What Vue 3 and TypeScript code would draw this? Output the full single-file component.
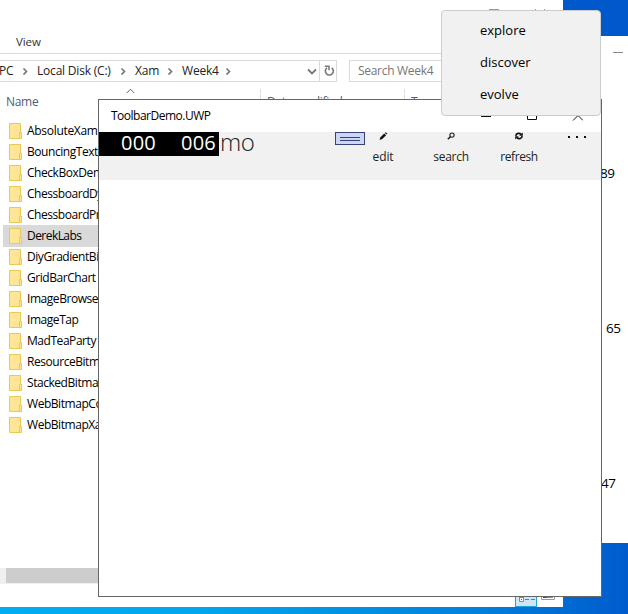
<script setup lang="ts">
interface Tool { id: string; label: string }
const crumbs: string[] = ['PC', 'Local Disk (C:)', 'Xam', 'Week4']
const folders: string[] = [
  'AbsoluteXam', 'BouncingText', 'CheckBoxDemo', 'ChessboardDynamic', 'ChessboardProportional',
  'DerekLabs', 'DiyGradientBitmap', 'GridBarChart', 'ImageBrowser', 'ImageTap', 'MadTeaParty',
  'ResourceBitmap', 'StackedBitmap', 'WebBitmapCode', 'WebBitmapXaml',
]
const selected = 'DerekLabs'
const tools: Tool[] = [
  { id: 'edit', label: 'edit' },
  { id: 'search', label: 'search' },
  { id: 'refresh', label: 'refresh' },
]
const menu: string[] = ['explore', 'discover', 'evolve']
</script>

<template>
  <main class="desktop">
    <section class="back-window">
      <span class="back-min"></span>
      <span class="num n1">89</span>
      <span class="num n2">65</span>
      <span class="num n3">47</span>
    </section>

    <section class="explorer">
      <header class="ribbon">
        <svg class="caption" width="80" height="16" viewBox="0 0 80 16">
          <path d="M8 9.5h10M54 9l1 1M63 9.5h1" stroke="#999" fill="none" />
        </svg>
        <span class="view">View</span>
      </header>
      <div class="address-row">
        <div class="address">
          <template v-for="c in crumbs" :key="c">
            <span class="crumb" :class="'c-' + c.slice(0, 2)">{{ c }}</span>
            <svg class="chev" width="6" height="8" viewBox="0 0 6 8"><path d="M1.500 1.500l3 3-3 3" stroke="#777" stroke-width="1.7" fill="none" /></svg>
          </template>
          <svg class="drop" width="10" height="7" viewBox="0 0 10 7"><path d="M1 1.500l4 4 4-4" stroke="#777" stroke-width="1.8" fill="none" /></svg>
          <span class="reload">
            <svg width="11" height="12" viewBox="0 0 11 12">
              <path d="M7.7 2.8A4 4 0 1 1 3 2.8" stroke="#777" stroke-width="1.6" fill="none" />
              <path d="M0.8 1.2h4.2v4" stroke="#777" stroke-width="1.5" fill="none" />
            </svg>
          </span>
        </div>
        <div class="find"><span class="find-text">Search Week4</span></div>
      </div>
      <div class="columns">
        <div class="col name"><span>Name</span>
          <svg class="sort" width="9" height="6" viewBox="0 0 9 6"><path d="M.8 5l3.7-3.8L8.2 5" stroke="#666" fill="none" /></svg>
        </div>
        <div class="col date"><span>Date modified</span></div>
        <div class="col"><span>Type</span></div>
      </div>
      <ul class="files">
        <li v-for="f in folders" :key="f" :class="{ selected: f === selected }">
          <svg width="14" height="17" viewBox="0 0 14 17">
            <path d="M.5.5h11v15H.5z" fill="#ffe696" stroke="#ebc755" />
            <path d="M10.5 9.5h2v6h-2z" fill="#ffe696" stroke="#ebc755" />
          </svg>
          <span>{{ f }}</span>
        </li>
      </ul>
      <div class="scroll"></div>
      <footer class="status">
        <span class="details">
          <svg width="22" height="12" viewBox="0 0 22 12">
            <path d="M4.5 0v5.500h4V0M4.500 1.500h4" fill="#fff" stroke="#888" />
            <path d="M6 3h1v1H6z" fill="#a33" />
            <path d="M10 3.500h4M16 3.500h4" stroke="#777" />
          </svg>
        </span>
        <svg class="thumb" width="14" height="5" viewBox="0 0 14 5">
          <path d="M.5 0v3.500h13V0" fill="#fff" stroke="#999" />
          <path d="M2 0h10v2H2z" fill="#6a94b9" /><path d="M2 0h4v2H2z" fill="#24568c" />
        </svg>
      </footer>
    </section>

    <section class="app">
      <header class="titlebar">
        <span class="title">ToolbarDemo.UWP</span>
        <svg class="window-controls" width="104" height="11" viewBox="0 0 104 11">
          <path d="M2 5.500h10M48.500 0v8.500h9V0M94 9.500l5-5 5 5" stroke="#111" fill="none" />
        </svg>
      </header>
      <div class="commandbar">
        <div class="counters"><span>000</span><span>006</span></div>
        <span class="heading">mo</span>
        <div class="debug"><i></i></div>
        <div v-for="t in tools" :key="t.id" class="tool" :class="t.id">
          <svg width="10" height="9" viewBox="0 0 10 9">
            <path v-if="t.id === 'edit'" d="M1.500 7.800l.7-2.300L6.200 1.500l1.900 1.700-4.100 4zM6.900.9l.9-.7 1.600 1.500-.8.900z" fill="#111" />
            <template v-else-if="t.id === 'search'">
              <circle cx="6" cy="3.100" r="2.100" stroke="#222" stroke-width="1.100" fill="none" />
              <path d="M4.500 4.600L1.800 7.300" stroke="#222" stroke-width="1.500" />
            </template>
            <template v-else>
              <path d="M1.800 3.800C2.200 1 5.500.6 7 2.400M8.200 4.200C7.800 7 4.500 7.400 3 5.600" stroke="#111" stroke-width="1.700" fill="none" />
              <path d="M8.800.4v3.400H5.200zM1.200 7.600V4.200h3.600z" fill="#111" />
            </template>
          </svg>
          <span>{{ t.label }}</span>
        </div>
        <div class="more"><i></i><i></i><i></i></div>
      </div>
    </section>

    <nav class="menu">
      <span v-for="m in menu" :key="m" :class="m">{{ m }}</span>
    </nav>
  </main>
</template>

<style>
body { margin: 0; overflow: hidden; }
</style>

<style scoped>
* { box-sizing: border-box; }
svg { display: block; flex: none; }
.desktop {
  position: relative; width: 628px; height: 614px; overflow: hidden;
  background: linear-gradient(90deg, #00adf2 0, #00a6ee 200px, #0080dc 480px, #0064d0 590px, #005ccd 628px);
  font-family: "Open Sans", "Noto Sans", sans-serif; font-size: 12px; line-height: 20px; color: #000; white-space: nowrap;
}
.desktop::before { content: ""; position: absolute; right: 0; top: 0; width: 65px; height: 36px; background: #0059cc; }
.back-window { position: absolute; left: 563px; top: 36px; width: 65px; height: 507px; background: #fff; }
.back-min { position: absolute; left: 50px; top: 16px; width: 10px; height: 1px; background: #888; }
.num { position: absolute; font-size: 13.500px; left: 37px; letter-spacing: -.4px; }
.n1 { top: 127px; }
.n2 { top: 282px; left: 43px; }
.n3 { top: 437px; left: 38px; }
.explorer {
  position: absolute; left: 0; top: 0; width: 563px; height: 607px; background: #fff; overflow: hidden;
  display: flex; flex-direction: column;
}
.ribbon { height: 54px; flex: none; border-bottom: 1px solid #dadada; display: flex; padding: 32px 0 0 16px; position: relative; }
.caption { position: absolute; left: 481px; top: 0; }
.view { font-size: 11.500px; letter-spacing: -.1px; color: #333; }
.address-row { display: flex; height: 28px; padding-top: 6px; flex: none; gap: 12px; }
.address { width: 337px; height: 22px; border: 1px solid #dadada; border-left: 0; display: flex; align-items: center; color: #222; }
.crumb { letter-spacing: -.2px; }
.c-PC { width: 23px; margin-left: -1px; }
.c-Lo { width: 83px; margin-left: 9px; }
.c-Xa { width: 32px; margin-left: 9px; }
.c-We { width: 43px; margin-left: 9px; }
.drop { margin-left: auto; margin-right: 2px; }
.reload { height: 20px; width: 17px; border-left: 1px solid #dadada; display: flex; align-items: center; justify-content: center; }
.reload svg { margin-left: 2px; }
.find { flex: 1; height: 22px; border: 1px solid #dadada; color: #777; padding-left: 8px; }
.find-text { letter-spacing: -.3px; }
.columns { height: 38px; flex: none; display: flex; padding-top: 7px; color: #4c607a; letter-spacing: -.3px; }
.col { height: 31px; padding: 3px 0 0 6px; position: relative; }
.col.name { width: 261px; border-right: 1px solid #e0e0e0; }
.col.date { width: 144px; border-right: 1px solid #e0e0e0; }
.sort { position: absolute; left: 126px; top: -1px; }
.files { list-style: none; margin: 0; padding: 0 0 0 3px; height: 448px; flex: none; }
.files li { height: 21px; width: 240px; display: flex; align-items: center; padding: 2px 0 0 6px; gap: 4px; letter-spacing: -.45px; }
.files li:first-child { letter-spacing: -.3px; }
.files li span { margin-top: -1px; }
.files .selected { background: #d9d9d9; box-shadow: 0 1px #d9d9d9; letter-spacing: -.55px; }
.scroll { height: 16px; flex: none; background: linear-gradient(#cdcdcd, #cdcdcd) 6px 0 / 100% 15px no-repeat #f0f0f0; }
.status { display: flex; padding: 12px 0 0 515px; height: 23px; gap: 4px; }
.details { width: 22px; height: 11px; background: #cce8f6; border: 1px solid #26a0da; border-top: 0; }
.details svg { margin: 0 -1px; }
.app { position: absolute; left: 98px; top: 99px; width: 504px; height: 498px; background: #fff; border: 1px solid #666; }
.titlebar { height: 32px; display: flex; justify-content: space-between; padding: 6px 18px 0 12px; }
.title { letter-spacing: -.5px; }
.window-controls { margin-top: 5px; }
.commandbar { height: 48px; background: #f1f1f1; display: flex; align-items: flex-start; }
.counters { width: 120px; height: 24px; background: #000; color: #fff; font-size: 20px; font-weight: 500; line-height: 22px; display: flex; padding-left: 22px; letter-spacing: .2px; }
.counters span { width: 60px; flex: none; }
.heading { font-weight: 300; font-size: 24px; line-height: 20px; width: 116px; color: #222; padding-left: 1px; letter-spacing: -.4px; }
.debug { width: 30px; height: 13px; background: #ccd6f2; border: 1px solid #36417a; padding: 4px 4px 0; }
.debug i { display: block; height: 4px; border: solid #36417a; border-width: 1px 0; }
.tool { width: 68px; display: flex; flex-direction: column; align-items: center; color: #222; letter-spacing: -.25px; }
.tool span { margin-top: 6px; }
.tool.edit { margin-left: -16px; letter-spacing: -.1px; }
.tool.refresh { letter-spacing: -.45px; }
.more { display: flex; gap: 6px; padding: 4px 0 0 15px; }
.more i { width: 2px; height: 2px; background: #111; }
.menu {
  position: absolute; left: 441px; top: 10px; width: 160px; height: 106px; background: #f1f1f1;
  border: 1px solid #ccc; border-radius: 4px; display: flex; flex-direction: column; padding: 3px 0 0 38px;
  font-size: 13px; line-height: 32px;
}
</style>
